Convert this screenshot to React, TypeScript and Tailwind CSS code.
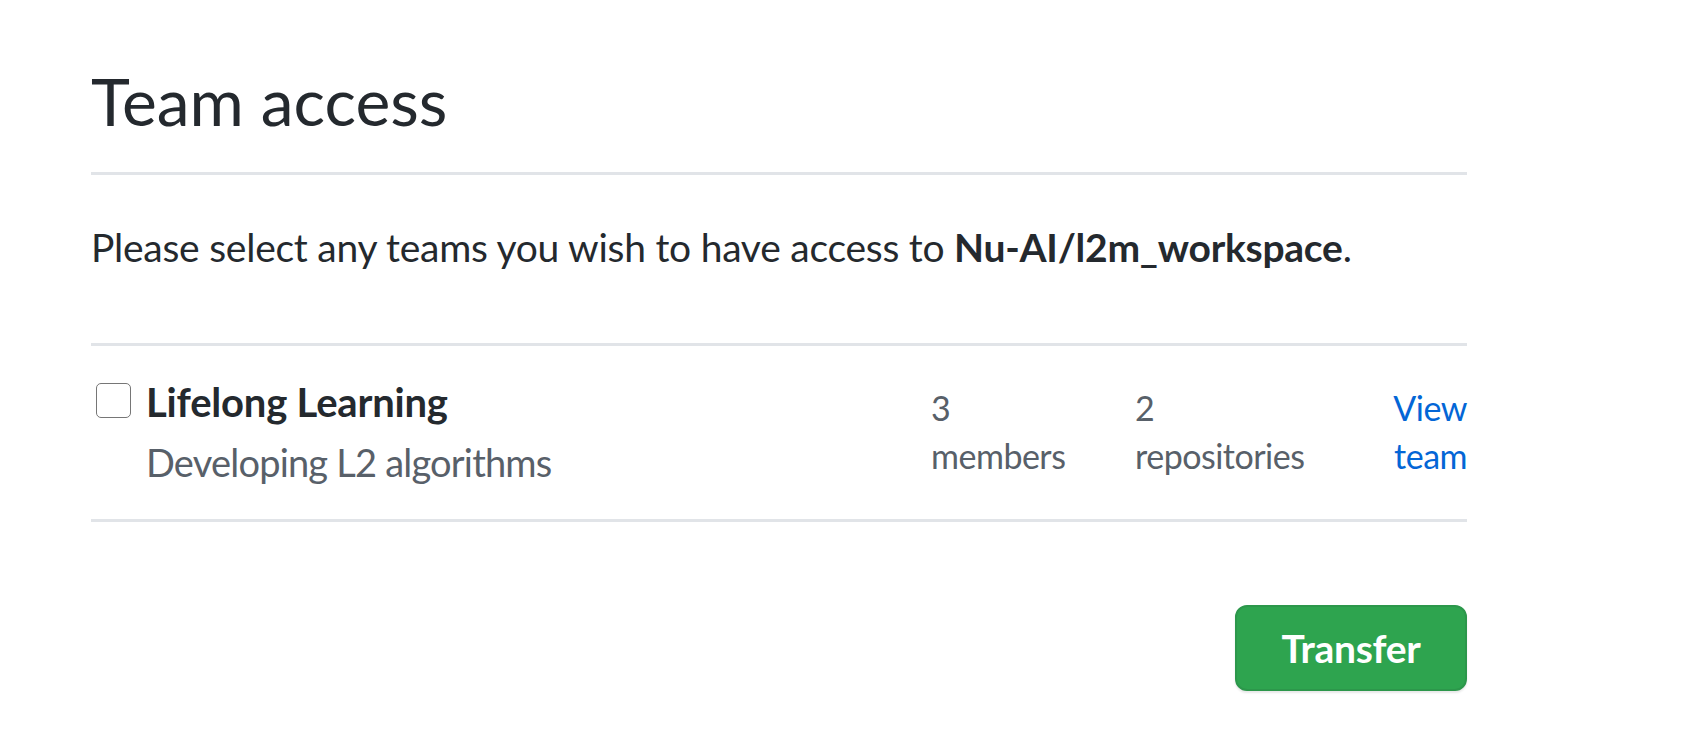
export default function App() {
  return (
    <div className="min-h-screen bg-white font-['Lato',sans-serif] text-[#24292e]">
      <div className="w-[1467px] pl-[91px] pt-[61px]">
        <h2 className="text-[66px] leading-[80px] font-normal">Team access</h2>
        <div className="mt-[31px] h-[3px] bg-[#e1e4e8]" />

        <p className="mt-[42px] text-[39px] leading-[60px] tracking-[-0.25px]">
          Please select any teams you wish to have access to{" "}
          <strong className="font-bold">Nu-AI/l2m_workspace</strong>.
        </p>

        <div className="mt-[66px] border-y-[3px] border-[#e1e4e8] pt-[26px] pb-[27px]">
          <div className="flex items-start">
            <input
              type="checkbox"
              className="mt-[11px] ml-[5px] h-[35px] w-[35px] shrink-0 appearance-none rounded-[5px] border-[1.5px] border-[#767676] bg-white"
            />
            <div className="ml-[15px] flex-1">
              <div className="text-[40px] leading-[60px] font-bold tracking-[-0.2px]">Lifelong Learning</div>
              <div className="text-[38px] leading-[60px] tracking-[-0.8px] text-[#586069]">
                Developing L2 algorithms
              </div>
            </div>
            <div className="mt-[12px] flex w-[536px] text-[34px] leading-[48px] tracking-[-0.5px] text-[#586069]">
              <div className="w-[204px]">
                <div>3</div>
                <div>members</div>
              </div>
              <div className="w-[250px]">
                <div>2</div>
                <div>repositories</div>
              </div>
              <a href="#" className="w-[82px] text-right text-[#0366d6]">
                <div>View</div>
                <div>team</div>
              </a>
            </div>
          </div>
        </div>

        <div className="mt-[83px] flex justify-end">
          <button className="h-[86px] w-[232px] rounded-[12px] border-[2px] border-[#2c974b] bg-[#2ea44f] text-[39px] font-bold tracking-[-0.3px] text-white shadow-[0_2px_2px_rgba(27,31,35,0.1)]">
            Transfer
          </button>
        </div>
      </div>
    </div>
  );
}
